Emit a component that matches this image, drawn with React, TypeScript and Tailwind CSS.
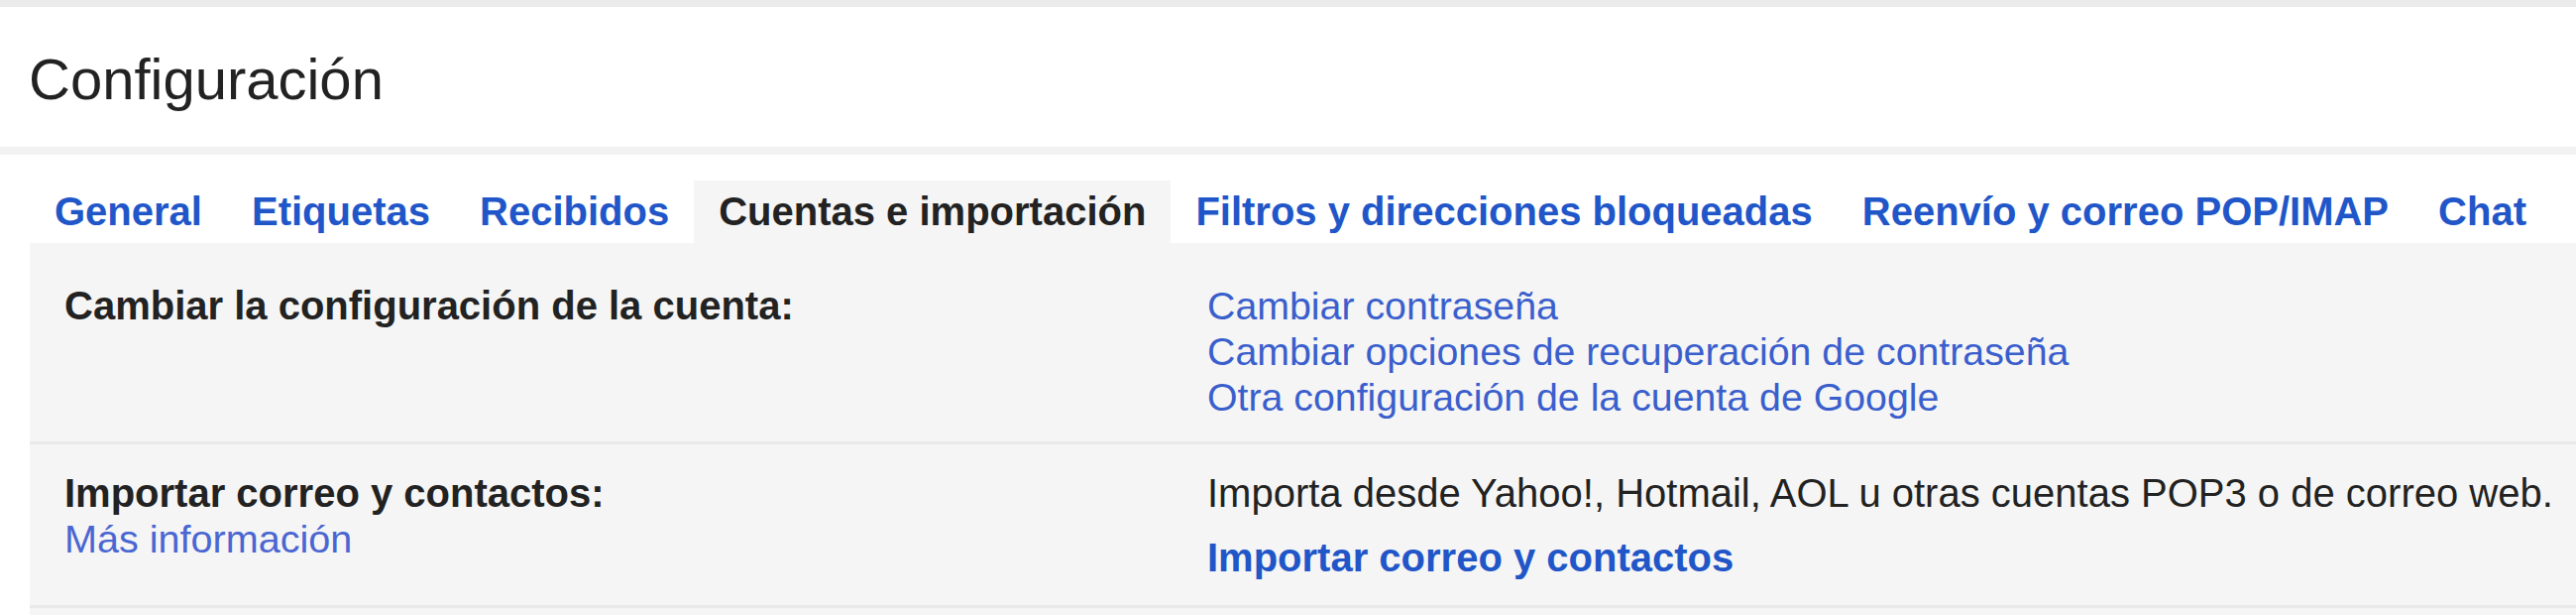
import React from "react";

const tabs = [
  { label: "General", active: false },
  { label: "Etiquetas", active: false },
  { label: "Recibidos", active: false },
  { label: "Cuentas e importación", active: true },
  { label: "Filtros y direcciones bloqueadas", active: false },
  { label: "Reenvío y correo POP/IMAP", active: false },
  { label: "Chat", active: false },
];

export default function App() {
  return (
    <div className="w-[2599px] h-[620px] overflow-hidden bg-white text-[#222222] font-['Liberation_Sans',Arial,sans-serif]">
      <div className="h-[7px] bg-[#ebebeb]" />
      <div className="pl-[29px] pt-[44px] pb-[40px] text-[58px] leading-[57px] text-[#222222]">
        Configuración
      </div>
      <div className="h-[8px] bg-[#f2f2f2]" />
      <div className="flex pl-[30px] pt-[26px]">
        {tabs.map((t) => (
          <div
            key={t.label}
            className={
              t.active
                ? "h-[63px] px-[25px] text-[40px] leading-[63px] font-bold whitespace-nowrap bg-[#f5f5f5] text-[#222222]"
                : "h-[63px] px-[25px] text-[40px] leading-[63px] font-bold whitespace-nowrap text-[#2156c9]"
            }
          >
            {t.label}
          </div>
        ))}
      </div>
      <div className="ml-[30px] bg-[#f5f5f5] text-[40px] leading-[46px]">
        <div className="flex pt-[40px] pb-[22px]">
          <div className="w-[1188px] shrink-0 pl-[35px] font-bold">
            Cambiar la configuración de la cuenta:
          </div>
          <div className="flex flex-col text-[39.3px] text-[#3a5fcd]">
            <span>Cambiar contraseña</span>
            <span>Cambiar opciones de recuperación de contraseña</span>
            <span>Otra configuración de la cuenta de Google</span>
          </div>
        </div>
        <div className="h-[3px] bg-[#e9e9e9]" />
        <div className="flex pt-[26px] pb-[25px]">
          <div className="w-[1188px] shrink-0 pl-[35px] flex flex-col">
            <span className="font-bold">Importar correo y contactos:</span>
            <span className="text-[39.6px] text-[#4a66d2]">Más información</span>
          </div>
          <div className="flex flex-col whitespace-nowrap">
            <span>
              Importa desde Yahoo!, Hotmail, AOL u otras cuentas POP3 o de correo web.
            </span>
            <span className="mt-[19px] font-bold text-[#2156c8]">
              Importar correo y contactos
            </span>
          </div>
        </div>
        <div className="h-[3px] bg-[#e9e9e9]" />
        <div className="h-[20px]" />
      </div>
    </div>
  );
}
